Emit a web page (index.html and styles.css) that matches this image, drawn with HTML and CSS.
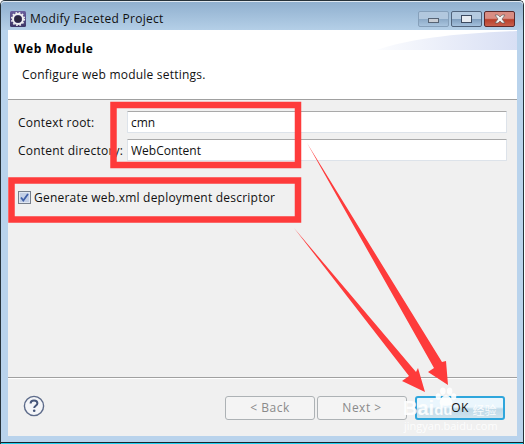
FILE: index.html
```html
<!DOCTYPE html>
<html lang="en">
<head>
<meta charset="utf-8">
<title>Modify Faceted Project</title>
<link rel="stylesheet" href="styles.css">
</head>
<body>
<div class="window">
  <div class="titlebar">
    <svg class="app-icon" width="16" height="16" viewBox="0 0 16 16">
      <defs><linearGradient id="ig" x1="0" y1="0" x2="0" y2="1"><stop offset="0" stop-color="#6a5f9e"/><stop offset="1" stop-color="#3d3566"/></linearGradient></defs>
      <rect width="16" height="16" rx="1.5" fill="url(#ig)"/>
      <circle cx="8" cy="8" r="5" fill="none" stroke="#f2f2f2" stroke-width="2"/>
      <circle cx="8" cy="8" r="6.3" fill="none" stroke="#f2f2f2" stroke-width="1.6" stroke-dasharray="1.6 1.7"/>
      <circle cx="8" cy="8" r="3.6" fill="#2c2740"/>
    </svg>
    <span class="title">Modify Faceted Project</span>
    <div class="controls">
      <div class="ctl ctl-min"><span class="glyph-min"></span></div>
      <div class="ctl ctl-max"><span class="glyph-max"></span></div>
      <div class="ctl ctl-close">
        <svg width="12" height="10" viewBox="0 0 12 10"><path d="M1 1h3l2 2 2-2h3L8 5l3 4H8L6 7 4 9H1l3-4z" fill="#f4f4f4" stroke="#555" stroke-width=".6"/></svg>
      </div>
    </div>
  </div>
  <div class="client">
    <header class="banner">
      <h1 class="banner-title">Web Module</h1>
      <p class="banner-desc">Configure web module settings.</p>
      <svg class="banner-art" width="140" height="20" viewBox="0 0 140 20" preserveAspectRatio="none">
        <defs><linearGradient id="bg" x1="0" y1="0" x2="1" y2="0"><stop offset="0" stop-color="#fbfcfe"/><stop offset="1" stop-color="#d8dff4"/></linearGradient></defs>
        <path d="M0 20C30 9 80 3 140 1V20Z" fill="url(#bg)"/>
      </svg>
    </header>
    <main class="form">
      <div class="fields">
        <label class="field-label">Context root:</label>
        <input class="field-input" value="cmn">
        <label class="field-label">Content directory:</label>
        <input class="field-input" value="WebContent">
      </div>
      <label class="check-row">
        <svg class="check" width="13" height="13" viewBox="0 0 13 13">
          <rect x=".5" y=".5" width="12" height="12" fill="#dfe6f2" stroke="#777f8c"/>
          <rect x="2" y="2" width="9" height="9" fill="#c3cfe6"/>
          <path d="M3 6.5l2.3 3L10 3" fill="none" stroke="#3f5fa8" stroke-width="1.8"/>
        </svg>
        <span>Generate web.xml deployment descriptor</span>
      </label>
    </main>
    <footer class="buttonbar">
      <svg class="help" width="22" height="22" viewBox="0 0 22 22">
        <circle cx="11" cy="11" r="9.6" fill="#f4f5f8" stroke="#5d6b8a" stroke-width="1.4"/>
        <path d="M7.6 8.4c0-2 1.5-3 3.4-3s3.4 1 3.4 2.8c0 2.500-3.200 2.500-3.200 4.800" fill="none" stroke="#46567a" stroke-width="2"/>
        <circle cx="11.200" cy="15.800" r="1.300" fill="#46567a"/>
      </svg>
      <div class="buttons">
        <button class="btn" disabled>&lt; Back</button>
        <button class="btn" disabled>Next &gt;</button>
        <button class="btn btn-default">OK</button>
      </div>
    </footer>
  </div>
  <svg class="marks" width="525" height="444" viewBox="0 0 525 444">
    <rect x="113.500" y="105" width="184.500" height="60" fill="none" stroke="#fe3b3b" stroke-width="6.500"/>
    <rect x="11.500" y="180.500" width="286.500" height="39" fill="none" stroke="#fe3b3b" stroke-width="6.500"/>
    <path d="M307 143L442 362 446 361 448 385 428 372 434 368Z" fill="#fe3b3b"/>
    <path d="M294 228L416 372 418 368 425 392 402 381 409 376Z" fill="#fe3b3b"/>
  </svg>
  <div class="watermark">
    <svg class="paw" width="22" height="20" viewBox="0 0 24 22">
      <ellipse cx="8.500" cy="4.500" rx="3" ry="4" fill="#fff"/>
      <ellipse cx="16" cy="4.500" rx="3" ry="4" fill="#fff"/>
      <ellipse cx="3.500" cy="10.500" rx="2.800" ry="3.500" fill="#fff"/>
      <ellipse cx="20.500" cy="10.500" rx="2.800" ry="3.500" fill="#fff"/>
      <path d="M12 9c3.500 0 7 5 7 8s-3 3.500-7 3.500-7-.5-7-3.500 3.500-8 7-8z" fill="#fff"/>
    </svg>
    <div class="wm-brand"><span>Bai</span><span class="wm-du">du</span><span class="wm-cn">经验</span></div>
    <div class="wm-url">jingyan.baidu.com</div>
  </div>
</div>
</body>
</html>
```
FILE: styles.css
```css
* { box-sizing: border-box; }
html, body { margin: 0; padding: 0; }
body {
  width: 525px;
  height: 444px;
  overflow: hidden;
  background: #fff;
  font-family: "Open Sans", "Liberation Sans", sans-serif;
  font-size: 12px;
  letter-spacing: .22px;
  color: #111;
}
.window {
  position: relative;
  width: 524px;
  height: 444px;
  display: flex;
  flex-direction: column;
  border: 1px solid #26323a;
  border-bottom: 0;
  border-radius: 5px 5px 0 0;
  background: #b9d3ec;
  padding: 0 6px 8px 7px;
  box-shadow: inset 0 -1px 0 #1fd0ee, inset 0 -2px 0 #15252e;
}
.titlebar {
  flex: 0 0 29px;
  display: flex;
  align-items: center;
  margin: 0 -6px 0 -7px;
  padding: 0 8px 0 9px;
  background: linear-gradient(#8fafce, #b4cfe7);
  border-radius: 4px 4px 0 0;
  box-shadow: inset 0 1px 0 #dfe8f0;
}
.app-icon { flex: none; margin-top: 6px; }
.title { margin-left: 4px; margin-top: 5px; color: #111; white-space: nowrap; letter-spacing: .28px; }
.controls { margin-left: auto; margin-top: 6px; display: flex; gap: 2px; }
.ctl {
  width: 31px;
  height: 16px;
  border-radius: 2px;
  display: flex;
  align-items: center;
  justify-content: center;
  border: 1px solid #6f8299;
}
.ctl-min { background: linear-gradient(#b2c8de 50%, #8ba9c6 50%, #a9c4de); border-color: #86a0ba; }
.ctl-max { background: linear-gradient(#b4cae0 50%, #7e9dbd 50%, #a4c0dc); border-color: #51647c; }
.ctl-close { background: linear-gradient(#d98d83 45%, #b8402b 55%, #c9604d); border-color: #5c2a2c; }
.glyph-min { width: 11px; height: 5px; margin-top: 3px; background: #c9ced5; border: 1px solid #566374; }
.glyph-max { width: 11px; height: 8px; background: #e6ebf1; border: 1px solid #3c4a60; }
.client { flex: 1; display: flex; flex-direction: column; background: #f0f0f0; min-height: 0; }
.banner {
  position: relative;
  flex: 0 0 70px;
  background: #fff;
  border-bottom: 1px solid #a0a0a0;
}
.banner-title { margin: 0; padding: 11px 0 0 6px; font-size: 12px; line-height: 16px; font-weight: 700; color: #000; letter-spacing: .5px; }
.banner-desc { margin: 0; padding: 10px 0 0 14px; line-height: 16px; }
.banner-art { position: absolute; top: 0; right: 0; display: block; }
.form { flex: 1; padding: 11px 10px 0 10px; display: flex; flex-direction: column; }
.fields {
  display: grid;
  grid-template-columns: 109px 380px;
  row-gap: 6px;
  align-items: center;
}
.field-label { white-space: nowrap; overflow: visible; }
.field-input {
  height: 22px;
  width: 380px;
  padding: 0 3px;
  font: inherit;
  color: #111;
  background: #fff;
  border: 1px solid #dde3ea;
  border-top-color: #a9a9a9;
  border-radius: 1px;
  outline: none;
}
.check-row { display: flex; align-items: center; gap: 3px; margin-top: 28px; height: 16px; }
.check { flex: none; display: block; }
.buttonbar {
  flex: 0 0 59px;
  display: flex;
  align-items: center;
  justify-content: space-between;
  padding: 0 12px 0 15px;
  border-top: 1px solid #a0a0a0;
  box-shadow: inset 0 1px 0 #fff;
}
.help { display: block; margin-bottom: 2px; }
.buttons { display: flex; gap: 2px; margin-top: 2px; }
.btn {
  width: 90px;
  height: 24px;
  padding: 0 0 1px;
  font: inherit;
  letter-spacing: .5px;
  border: 1px solid #adb2b5;
  border-radius: 3px;
  background: #f4f4f4;
  color: #8a8a8a;
}
.btn-default {
  margin-left: 6px;
  color: #111;
  border: 2px solid #2fa6dc;
  background: linear-gradient(#eaf6fd 45%, #bfd9e8 55%, #d0e4ee);
}
.marks { position: absolute; left: -1px; top: -1px; pointer-events: none; }
.watermark {
  position: absolute;
  left: 402px;
  top: 386px;
  width: 96px;
  height: 58px;
  color: #fff;
  opacity: .9;
  letter-spacing: 0;
  pointer-events: none;
}
.paw { position: absolute; left: 32px; top: 0; }
.wm-brand { position: absolute; left: 0; top: 9px; display: flex; align-items: baseline; font-family: "Liberation Sans", sans-serif; font-weight: 700; font-size: 20px; line-height: 24px; white-space: nowrap; }
.wm-du { font-size: 15px; }
.wm-cn { margin-left: 20px; font-family: "Noto Sans CJK SC", sans-serif; font-size: 12px; font-weight: 400; }
.wm-url { position: absolute; left: 1px; top: 32px; font-size: 11px; line-height: 14px; white-space: nowrap; }
```
